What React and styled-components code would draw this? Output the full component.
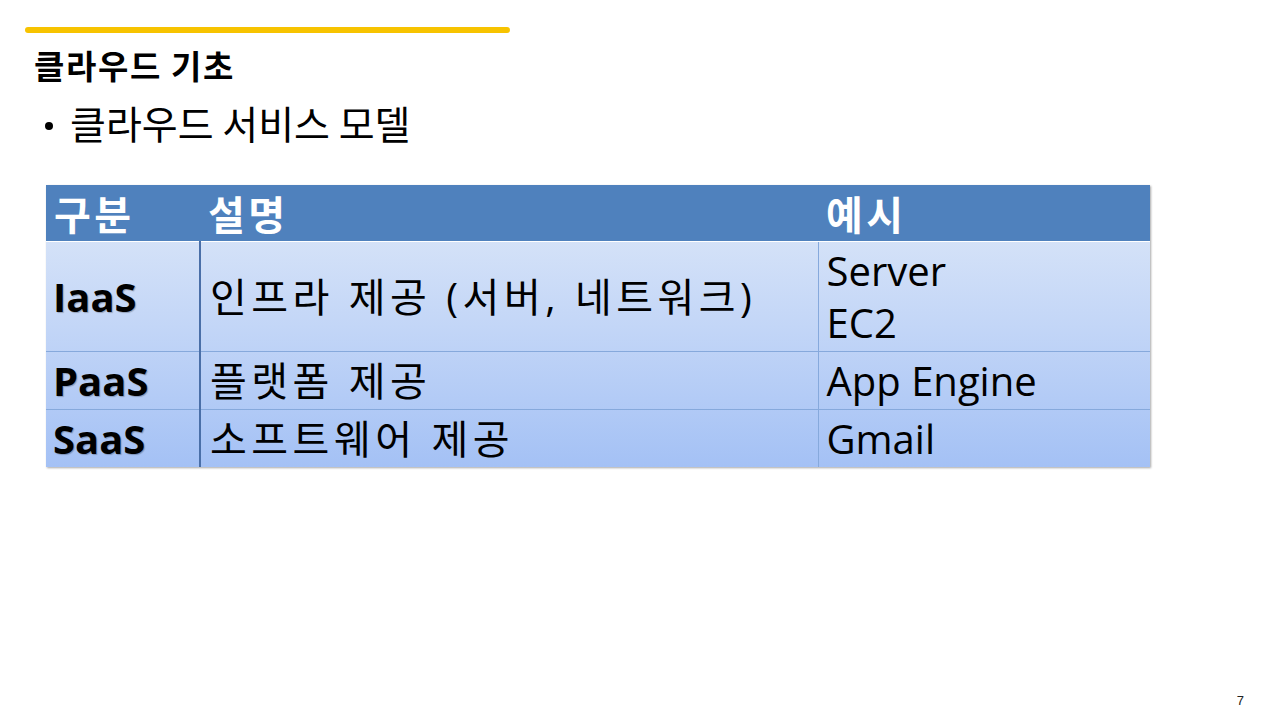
import React from 'react';
import styled, { createGlobalStyle } from 'styled-components';

const GlobalStyle = createGlobalStyle`
  html, body {
    margin: 0;
    padding: 0;
    background: #ffffff;
  }
  body {
    font-family: "Open Sans", "Noto Sans CJK KR", sans-serif;
    color: #000000;
  }
`;

const rows = [
  { id: 'IaaS', desc: '인프라 제공 (서버, 네트워크)', examples: ['Server', 'EC2'] },
  { id: 'PaaS', desc: '플랫폼 제공', examples: ['App Engine'] },
  { id: 'SaaS', desc: '소프트웨어 제공', examples: ['Gmail'] },
];

const App = () => (
  <>
    <GlobalStyle />
    <Slide>
      <AccentBar />
      <Title>클라우드 기초</Title>
      <Bullet>
        <Dot />
        클라우드 서비스 모델
      </Bullet>
      <TableFrame>
        <Table>
          <colgroup>
            <col style={{ width: 154 }} />
            <col style={{ width: 618 }} />
            <col />
          </colgroup>
          <thead>
            <tr>
              <HeaderCell>구분</HeaderCell>
              <HeaderCell>설명</HeaderCell>
              <HeaderCell>예시</HeaderCell>
            </tr>
          </thead>
          <tbody>
            {rows.map((row) => (
              <tr key={row.id}>
                <KeyCell>{row.id}</KeyCell>
                <DescCell>{row.desc}</DescCell>
                <ExampleCell>
                  {row.examples.map((ex) => (
                    <ExampleLine key={ex}>{ex}</ExampleLine>
                  ))}
                </ExampleCell>
              </tr>
            ))}
          </tbody>
        </Table>
      </TableFrame>
      <PageNumber>7</PageNumber>
    </Slide>
  </>
);

export default App;

const Slide = styled.div`
  position: relative;
  width: 1280px;
  height: 720px;
  box-sizing: border-box;
  padding: 27px 0 0 25px;
  overflow: hidden;
`;

const AccentBar = styled.div`
  width: 485px;
  height: 6px;
  border-radius: 3px;
  background: #f7c300;
`;

const Title = styled.h1`
  margin: 12px 0 0 9px;
  font-family: "Noto Sans CJK KR", sans-serif;
  font-size: 33px;
  font-weight: 700;
  line-height: 40px;
  letter-spacing: 1.6px;
`;

const Bullet = styled.div`
  margin: 12px 0 0 20px;
  font-family: "Noto Sans CJK KR", sans-serif;
  font-size: 39px;
  font-weight: 400;
  line-height: 50px;
  display: flex;
  align-items: center;
`;

const Dot = styled.span`
  width: 8px;
  height: 8px;
  margin: 8px 17px 0 0;
  border-radius: 50%;
  background: #000000;
`;

const TableFrame = styled.div`
  margin: 38px 0 0 21px;
  width: 1104px;
  background: linear-gradient(180deg, #dfe9f8 0%, #c3d6f7 50%, #a4c1f5 100%);
  box-shadow: 1px 1px 2px rgba(0, 0, 0, 0.35);
`;

const Table = styled.table`
  width: 100%;
  border-collapse: collapse;
  table-layout: fixed;
`;

const HeaderCell = styled.th`
  height: 56px;
  padding: 0 8px;
  background: #4f81bd;
  color: #ffffff;
  text-align: left;
  font-family: "Noto Sans CJK KR", sans-serif;
  font-size: 40px;
  font-weight: 700;
  line-height: 50px;
  letter-spacing: 3.5px;
  border-bottom: 1px solid #ffffff;
  vertical-align: middle;
`;

const cellBase = `
  padding: 4px 8px 3px;
  line-height: 50px;
  vertical-align: middle;
  text-align: left;
  border-top: 1px solid #86a9dc;
  white-space: nowrap;
`;

const KeyCell = styled.td`
  ${cellBase}
  padding-left: 7px;
  font-size: 40px;
  font-weight: 700;
  border-right: 2px solid #4a6fa8;
  text-shadow: 1px 1px 1px rgba(0, 0, 0, 0.25);
`;

const DescCell = styled.td`
  ${cellBase}
  padding-left: 9px;
  font-size: 40px;
  letter-spacing: 4.5px;
  border-right: 1px solid #86a9dc;
`;

const ExampleCell = styled.td`
  ${cellBase}
  font-size: 40px;
`;

const ExampleLine = styled.div`
  & + & {
    margin-top: 2px;
  }
`;

const PageNumber = styled.div`
  position: absolute;
  right: 36px;
  bottom: 12px;
  font-family: "Liberation Sans", sans-serif;
  font-size: 13px;
  color: #222222;
`;
